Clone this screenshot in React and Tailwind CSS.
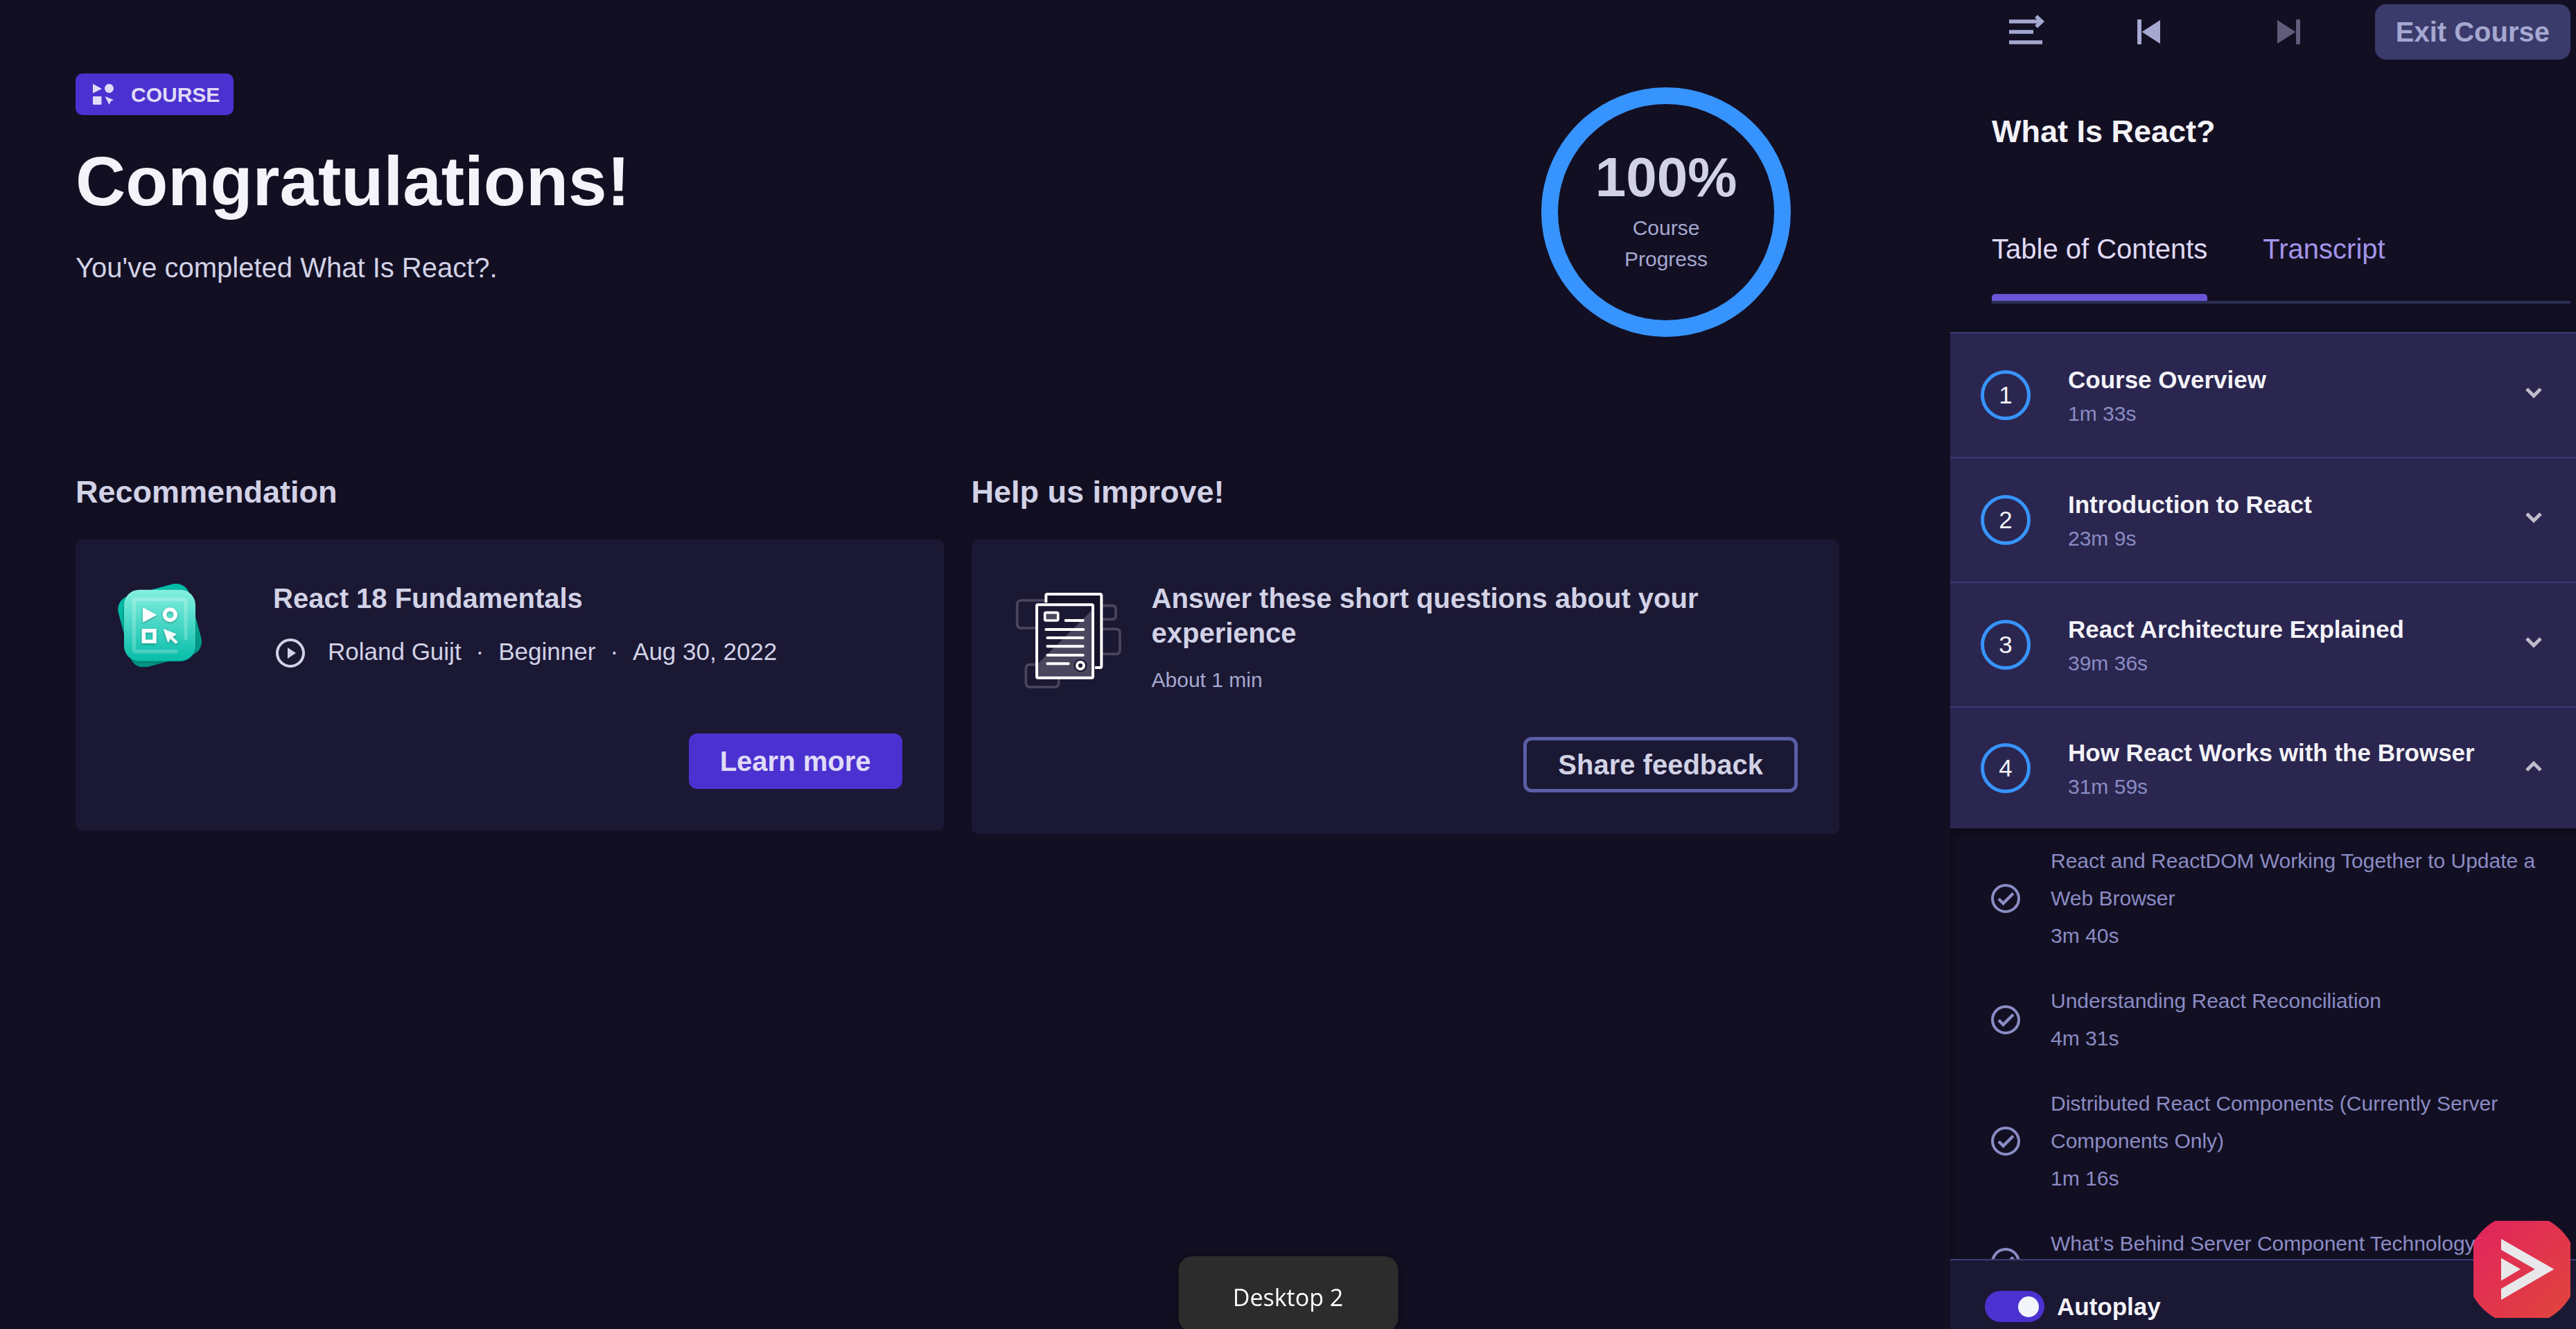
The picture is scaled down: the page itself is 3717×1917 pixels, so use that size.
import { useState } from "react";

const sections = [
  { n: 1, title: "Course Overview", time: "1m 33s" },
  { n: 2, title: "Introduction to React", time: "23m 9s" },
  { n: 3, title: "React Architecture Explained", time: "39m 36s" },
  { n: 4, title: "How React Works with the Browser", time: "31m 59s", open: true },
];

const lessons = [
  { title: "React and ReactDOM Working Together to Update a Web Browser", time: "3m 40s" },
  { title: "Understanding React Reconciliation", time: "4m 31s" },
  { title: "Distributed React Components (Currently Server Components Only)", time: "1m 16s" },
  { title: "What’s Behind Server Component Technology?" },
];

function CourseGlyph() {
  return (
    <svg viewBox="0 0 30 30" className="size-[30px]" fill="currentColor" aria-hidden="true">
      <path d="M0 0l13 7L0 13.500z" />
      <circle cx="23.500" cy="6.500" r="6.500" />
      <rect x="0" y="18" width="12.500" height="12" rx="1" />
      <path d="M17.500 18L30 23l-4 2-2.500 5z" />
    </svg>
  );
}

function CourseArt() {
  return (
    <svg viewBox="510 2514 372 372" className="h-[124px] w-[124px] shrink-0" aria-hidden="true">
      <defs>
        <linearGradient id="artBack" x1="0" y1="0" x2="0" y2="1">
          <stop offset="0" stopColor="#00bfa9" />
          <stop offset="1" stopColor="#009281" />
        </linearGradient>
        <linearGradient id="artFront" x1="0" y1="0" x2="0" y2="1">
          <stop offset="0" stopColor="#86f0e0" />
          <stop offset="1" stopColor="#05bda8" />
        </linearGradient>
        <filter id="artShadow" x="-20%" y="-20%" width="140%" height="140%">
          <feDropShadow dx="0" dy="4" stdDeviation="4" floodColor="#00332d" floodOpacity="0.4" />
        </filter>
      </defs>
      <g transform="translate(420 2460)">
        <rect x="116" y="88" width="318" height="318" rx="60" fill="url(#artBack)" transform="rotate(-15 275 247)" />
        <rect x="120" y="92" width="309" height="309" rx="66" fill="url(#artFront)" filter="url(#artShadow)" />
        <path
          d="M387 309V147q0-13-13-13H163v213q0 12 12 12h177"
          fill="none"
          stroke="#fff"
          strokeOpacity="0.22"
          strokeWidth="16"
        />
        <g fill="#fff" filter="url(#artShadow)">
          <path d="M201 175q0-6 6-3l51 27q4 2 0 4l-51 27q-6 3-6-3z" />
          <circle cx="319" cy="200" r="23.500" fill="none" stroke="#fff" strokeWidth="16" />
          <rect x="205" y="269" width="47" height="47" fill="none" stroke="#fff" strokeWidth="16" />
          <path d="M290 261l55 22q3 2 0 4l-15 9 20 19q3 3 0 6l-3 3q-3 3-6 0l-20-20-8 14q-2 3-4 0z" fill="#f2fafa" />
        </g>
      </g>
    </svg>
  );
}

function SurveyArt() {
  return (
    <svg viewBox="36 -6 480 480" className="size-40 shrink-0" fill="none" aria-hidden="true">
      <g stroke="#4b465d" strokeWidth="11">
        <path d="M175 78H71q-18 0-18 18v84q0 18 18 18h64" />
        <path d="M424 101h41q15 0 15 15v29q0 15-15 15h-41" />
        <path d="M424 202h57q17 0 17 17v74q0 17-17 17h-57" />
        <path d="M135 356h-26q-18 0-18 18v61q0 18 18 18h106q18 0 18-18v-18" />
      </g>
      <path d="M179 88V51h238v318h-27" fill="#151127" />
      <path d="M178 88V57q0-6 6-6h228q6 0 6 6v306q0 6-6 6h-22" stroke="#fff" strokeWidth="12" />
      <rect x="138" y="97" width="243" height="316" rx="5" fill="#1b1834" />
      <path d="M375 122v286H143v-56z" fill="#4b465d" />
      <rect x="138" y="97" width="243" height="316" rx="5" stroke="#fff" strokeWidth="12" />
      <rect x="173" y="131" width="57" height="34" rx="5" fill="#4b465d" stroke="#fff" strokeWidth="11" />
      <g stroke="#fff" strokeWidth="12" strokeLinecap="round">
        <path d="M263 165h75M178 204h162M184 240h154M184 277h154M184 315h154M184 352h91" />
      </g>
      <circle cx="327" cy="360" r="28" fill="#1b1834" />
      <circle cx="327" cy="360" r="15" fill="#1b1834" stroke="#fff" strokeWidth="12" />
    </svg>
  );
}

function PlayCircle() {
  return (
    <svg viewBox="0 0 50 50" className="size-[50px]" fill="none" aria-hidden="true">
      <circle cx="25" cy="27" r="19" stroke="currentColor" strokeWidth="4" />
      <path d="M21 19v16l12-8z" fill="currentColor" />
    </svg>
  );
}

function CheckCircle() {
  return (
    <svg viewBox="0 0 42 42" className="size-[42px] shrink-0" fill="none" stroke="#8a8cc4" aria-hidden="true">
      <circle cx="21" cy="21" r="19" strokeWidth="4" />
      <path d="M11 21.500l6.500 6.500L32 13.500" strokeWidth="4.500" />
    </svg>
  );
}

function Chevron({ up }) {
  return (
    <svg viewBox="0 0 24 16" className="mb-[6px] h-4 w-6 shrink-0" fill="none" stroke="#bfbccb" strokeWidth="5" aria-hidden="true">
      <path d={up ? "M2 14l10-10 10 10" : "M2 2l10 10 10-10"} />
    </svg>
  );
}

function Main() {
  return (
    <main className="min-w-0 flex-1 overflow-hidden pt-[106px] pr-40 pl-[109px]">
      <header className="flex justify-between pr-[70px]">
        <div>
          <span className="inline-flex h-[60px] items-center gap-[25px] rounded-[10px] bg-[#4b32d0] pr-5 pl-[25px] text-[30px] font-bold text-[#e0dbf7]">
            <CourseGlyph />
            COURSE
          </span>
          <h1 className="mt-[33px] text-[100px] leading-[125px] font-bold text-[#f4f3f9]">Congratulations!</h1>
          <p className="mt-8 text-[40px] leading-[60px]">You've completed What Is React?.</p>
        </div>
        <div className="mt-5 flex size-[360px] flex-col items-center justify-center rounded-full border-[24px] border-[#3794ff] pb-[10px] text-center">
          <strong className="text-[80px] leading-[100px]">100%</strong>
          <span className="text-[30px] leading-[45px] text-[#a5a8d0]">
            Course
            <br />
            Progress
          </span>
        </div>
      </header>

      <div className="mt-[196px] grid grid-cols-2 items-start gap-10">
        <section>
          <h2 className="text-[45px] leading-[56px] font-bold">Recommendation</h2>
          <div className="mt-10 rounded-[10px] bg-[#1b1834] p-[60px]">
            <div className="flex min-h-40 items-start gap-[101px]">
              <CourseArt />
              <div>
                <h3 className="text-[40px] leading-[50px] font-bold">React 18 Fundamentals</h3>
                <div className="mt-[27px] flex items-center text-[35px] leading-[50px]">
                  <PlayCircle />
                  <span className="ml-[29px]">Roland Guijt</span>
                  <span className="mx-[21px]">·</span>
                  <span>Beginner</span>
                  <span className="mx-[21px]">·</span>
                  <span>Aug 30, 2022</span>
                </div>
              </div>
            </div>
            <div className="mt-[60px] flex justify-end">
              <button type="button" className="h-20 rounded-xl bg-[#4b32d0] px-[45px] text-[40px] font-bold text-[#e0dbf7]">
                Learn more
              </button>
            </div>
          </div>
        </section>

        <section>
          <h2 className="text-[45px] leading-[56px] font-bold">Help us improve!</h2>
          <div className="mt-10 rounded-[10px] bg-[#1b1834] p-[60px]">
            <div className="flex items-start gap-10">
              <SurveyArt />
              <div>
                <h3 className="text-[40px] leading-[50px] font-bold">
                  Answer these short questions about your experience
                </h3>
                <p className="mt-5 text-[30px] leading-[45px] text-[#a5a8d0]">About 1 min</p>
              </div>
            </div>
            <div className="mt-[60px] flex justify-end">
              <button type="button" className="h-20 rounded-xl border-[5px] border-[#5a5ea6] px-[45px] text-[40px] font-bold">
                Share feedback
              </button>
            </div>
          </div>
        </section>
      </div>
    </main>
  );
}

function TopBar() {
  return (
    <div className="flex items-center pt-[6px] pr-2 pl-20 text-[#a5a8d0]">
      <button type="button" aria-label="Collapse menu" className="flex size-[60px] items-center justify-center">
        <svg viewBox="0 0 60 60" className="size-[60px]" stroke="currentColor" strokeWidth="5.500" fill="none">
          <path d="M5 15h47M5 30h35M5 45h48" />
          <path d="M44 7.500l8 7.500-8 7.500" />
        </svg>
      </button>
      <button type="button" aria-label="Previous" className="ml-[117px] flex size-[60px] items-center justify-center">
        <svg viewBox="0 0 34 36" className="h-9 w-[34px]" fill="currentColor">
          <rect x="0" y="0" width="6" height="36" rx="1" />
          <path d="M33 1v34L6.500 18z" />
        </svg>
      </button>
      <button type="button" aria-label="Next" className="ml-[141px] flex size-[60px] items-center justify-center text-[#5f5c7a]">
        <svg viewBox="0 0 34 36" className="h-9 w-[34px]" fill="currentColor">
          <rect x="28" y="0" width="6" height="36" rx="1" />
          <path d="M1 1v34l26.500-17z" />
        </svg>
      </button>
      <button type="button" className="ml-auto h-20 rounded-2xl bg-[#3a3b6b] px-[30px] text-[40px] font-bold whitespace-nowrap">
        Exit Course
      </button>
    </div>
  );
}

function Sidebar() {
  const [autoplay, setAutoplay] = useState(true);
  return (
    <aside className="flex w-[903px] shrink-0 flex-col">
      <TopBar />
      <h2 className="mt-[76px] pl-[60px] text-[45px] leading-[56px] font-bold text-[#f4f3f9]">What Is React?</h2>
      <div className="mt-[111px] mr-2 ml-[60px] border-b-4 border-[#2e2d55]">
        <div role="tablist" className="flex gap-20 text-[40px] leading-[60px]">
          <button type="button" role="tab" aria-selected="true" className="relative pb-[45px] text-[#e0dbf7]">
            Table of Contents
            <span className="absolute inset-x-0 bottom-0 h-[10px] rounded-t-[5px] bg-[#6a55d8]" />
          </button>
          <button type="button" role="tab" aria-selected="false" className="pb-[45px] text-[#a494ea]">
            Transcript
          </button>
        </div>
      </div>

      <div className="mt-[41px] min-h-0 flex-1 overflow-hidden">
        {sections.map((s) => (
          <button
            key={s.n}
            type="button"
            aria-expanded={!!s.open}
            className={`flex w-full items-center border-t-2 border-[#3d3d75] bg-[#2a264f] pr-[49px] pl-11 text-left ${s.open ? "h-44" : "h-[180px]"}`}
          >
            <span className="flex size-[72px] shrink-0 items-center justify-center rounded-full border-[5px] border-[#3794ff] text-[35px] text-[#f4f3f9]">
              {s.n}
            </span>
            <span className="ml-[54px] flex flex-1 flex-col gap-1 pt-1">
              <span className="text-[35px] leading-[45px] font-bold text-[#f4f3f9]">{s.title}</span>
              <span className="text-[30px] leading-[45px] text-[#8a8cc4]">{s.time}</span>
            </span>
            <Chevron up={s.open} />
          </button>
        ))}
        <ul className="shadow-[inset_4px_8px_10px_-4px_rgba(0,0,0,0.5)]">
          {lessons.map((l) => (
            <li key={l.title}>
              <a href="#lesson" className="flex items-center gap-11 py-5 pr-10 pl-[59px] text-[30px] leading-[54px] text-[#8a8cc4]">
                <CheckCircle />
                <span className="flex min-h-[108px] flex-col">
                  <span>{l.title}</span>
                  {l.time && <span>{l.time}</span>}
                </span>
              </a>
            </li>
          ))}
        </ul>
      </div>

      <div className="border-t-2 border-[#3d3d75] bg-[#1b1834] pt-11 pb-[10px] pl-[50px]">
        <label className="flex items-center gap-[18px] text-[35px] leading-[45px] font-bold text-[#f4f3f9]">
          <input
            type="checkbox"
            role="switch"
            checked={autoplay}
            onChange={(e) => setAutoplay(e.target.checked)}
            className="flex h-[45px] w-[86px] appearance-none items-center rounded-full bg-[#3d3d75] px-2 before:size-[30px] before:rounded-full before:bg-[#f2f6fa] checked:justify-end checked:bg-[#4b32d0]"
          />
          Autoplay
        </label>
      </div>
    </aside>
  );
}

export default function App() {
  return (
    <div className="flex h-screen overflow-hidden bg-[#130f23] font-['Liberation_Sans',Arial,sans-serif] text-[#d2d2e6]">
      <Main />
      <Sidebar />
      <div className="fixed -bottom-1 left-1/2 flex h-[109px] w-[317px] -translate-x-1/2 items-center justify-center rounded-[20px] bg-[#2c2c2c] pt-2 font-['Open_Sans','Noto_Sans',sans-serif] text-[34px] leading-[48px] text-white shadow-[0_0_6px_rgba(0,0,0,0.6)]">
        Desktop 2
      </div>
      <button type="button" aria-label="Open recorder" className="fixed right-2 bottom-4 size-[140px]">
        <svg viewBox="87 63 420 420" className="size-full">
          <defs>
            <linearGradient id="recorder" x1="0" y1="0" x2="1" y2="1">
              <stop offset="0.100" stopColor="#e8265f" />
              <stop offset="0.950" stopColor="#e8483c" />
            </linearGradient>
          </defs>
          <circle cx="297" cy="273" r="240" fill="url(#recorder)" fillOpacity="0.97" />
          <path d="M207 141l229 131-229 133v-48l146-85-146-84zM207 224l84 48-84 50z" fill="#e8e8ea" />
        </svg>
      </button>
    </div>
  );
}
